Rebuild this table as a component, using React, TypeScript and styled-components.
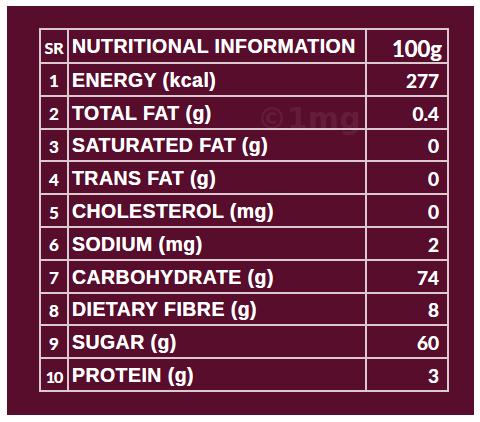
import styled, { createGlobalStyle } from "styled-components";

interface NutrientRow {
  sr: number;
  name: string;
  value: string;
}

const rows: NutrientRow[] = [
  { sr: 1, name: "ENERGY (kcal)", value: "277" },
  { sr: 2, name: "TOTAL FAT (g)", value: "0.4" },
  { sr: 3, name: "SATURATED FAT (g)", value: "0" },
  { sr: 4, name: "TRANS FAT (g)", value: "0" },
  { sr: 5, name: "CHOLESTEROL (mg)", value: "0" },
  { sr: 6, name: "SODIUM (mg)", value: "2" },
  { sr: 7, name: "CARBOHYDRATE (g)", value: "74" },
  { sr: 8, name: "DIETARY FIBRE (g)", value: "8" },
  { sr: 9, name: "SUGAR (g)", value: "60" },
  { sr: 10, name: "PROTEIN (g)", value: "3" },
];

function App() {
  return (
    <>
      <GlobalStyle />
      <Page>
        <Panel>
          <Table>
            <colgroup>
              <col style={{ width: 28 }} />
              <col style={{ width: 298 }} />
              <col style={{ width: 82 }} />
            </colgroup>
            <thead>
              <HeadRow>
                <SrCell $head>SR</SrCell>
                <NameCell $head>NUTRITIONAL INFORMATION</NameCell>
                <ValueCell $head>100g</ValueCell>
              </HeadRow>
            </thead>
            <tbody>
              {rows.map((row) => (
                <BodyRow key={row.sr}>
                  <SrCell $narrow={row.sr > 9}>{row.sr}</SrCell>
                  <NameCell>{row.name}</NameCell>
                  <ValueCell>{row.value}</ValueCell>
                </BodyRow>
              ))}
            </tbody>
          </Table>
          <Watermark>©1mg</Watermark>
        </Panel>
      </Page>
    </>
  );
}

export default App;

const GlobalStyle = createGlobalStyle`
  html, body {
    margin: 0;
    padding: 0;
    background: #ffffff;
  }
`;

const Page = styled.div`
  width: 480px;
  height: 422px;
  padding: 6px 6px 0 7px;
  box-sizing: border-box;
`;

const Panel = styled.div`
  position: relative;
  width: 467px;
  height: 409px;
  background: #590d2d;
  padding: 22px 0 0 32px;
  box-sizing: border-box;
`;

const Table = styled.table`
  width: 408px;
  border-collapse: collapse;
  table-layout: fixed;
  color: #ffffff;
`;

const HeadRow = styled.tr`
  height: 34px;
`;

const BodyRow = styled.tr`
  height: 32.8px;
`;

const Cell = styled.td<{ $head?: boolean }>`
  border: 2px solid #dcc9cf;
  padding: 0;
  vertical-align: middle;
  white-space: nowrap;
  overflow: hidden;
  text-shadow: 0 0 0.4px #ffffff;
`;

const SrCell = styled(Cell)<{ $narrow?: boolean }>`
  font-family: Lato, "Open Sans", sans-serif;
  font-weight: 700;
  font-size: ${(p) => (p.$head ? "16px" : p.$narrow ? "16px" : "17px")};
  letter-spacing: ${(p) => (p.$narrow ? "-1px" : "0")};
  text-align: center;
  padding-top: 3px;
`;

const NameCell = styled(Cell)`
  font-family: "Liberation Sans", Arial, sans-serif;
  font-weight: 700;
  font-size: 19.5px;
  letter-spacing: 0.45px;
  padding-left: 3px;
  padding-top: ${(p) => (p.$head ? "0" : "2px")};
`;

const ValueCell = styled(Cell)`
  font-family: Lato, "Open Sans", sans-serif;
  font-weight: 700;
  font-size: ${(p) => (p.$head ? "22px" : "19px")};
  text-align: right;
  padding-right: ${(p) => (p.$head ? "5px" : "8px")};
  padding-top: ${(p) => (p.$head ? "4px" : "2px")};
`;

const Watermark = styled.div`
  position: absolute;
  left: 250px;
  top: 95px;
  font-family: "DejaVu Sans", sans-serif;
  font-weight: 700;
  font-size: 30px;
  color: rgba(200, 190, 195, 0.1);
  pointer-events: none;
`;
